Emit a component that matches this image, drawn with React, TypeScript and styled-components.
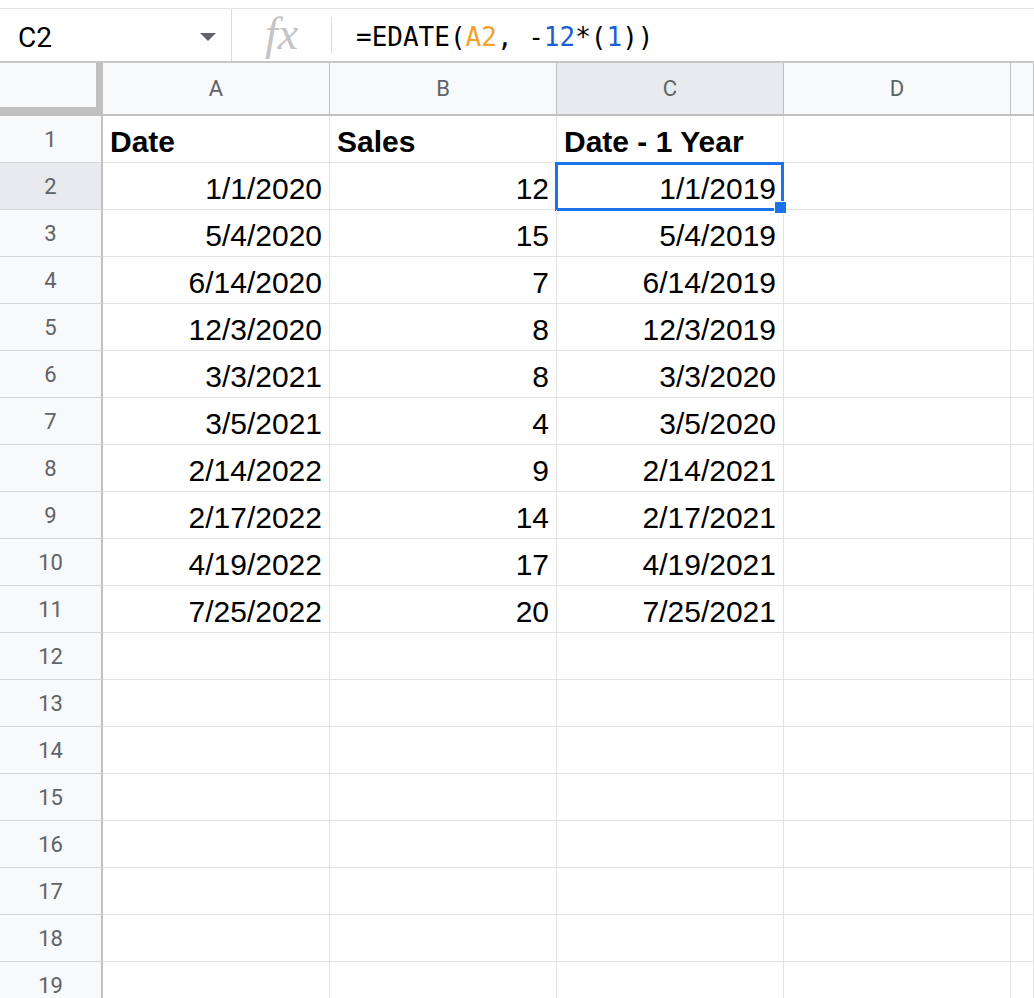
import React from "react";
import styled, { createGlobalStyle } from "styled-components";

const GlobalStyle = createGlobalStyle`
  html, body {
    margin: 0;
    padding: 0;
    background: #fff;
    overflow: hidden;
  }
  body {
    font-family: "Liberation Sans", Arial, sans-serif;
  }
`;

const Page = styled.div`
  width: 1034px;
  height: 998px;
  overflow: hidden;
  background: #fff;
`;

const FormulaBar = styled.div`
  margin-top: 8px;
  height: 52px;
  border-top: 1px solid #e3e3e3;
  border-bottom: 2px solid #c7c7c7;
  display: flex;
  align-items: stretch;
`;

const NameBox = styled.div`
  width: 232px;
  box-sizing: border-box;
  padding: 4px 15px 0 18px;
  display: flex;
  align-items: center;
  justify-content: space-between;
  border-right: 1px solid #dadce0;
  font-family: Roboto, "Liberation Sans", sans-serif;
  font-size: 28px;
  color: #000;
`;

const Caret = styled.span`
  width: 0;
  height: 0;
  border-left: 8px solid transparent;
  border-right: 8px solid transparent;
  border-top: 8px solid #5f6368;
`;

const FxBox = styled.div`
  width: 99px;
  display: flex;
  align-items: center;
  justify-content: center;
  font-family: "Liberation Serif", "Times New Roman", serif;
  font-style: italic;
  font-size: 46px;
  color: #c4c4c4;
  padding-bottom: 4px;
  box-sizing: border-box;
`;

const Divider = styled.div`
  width: 1px;
  height: 37px;
  background: #dadce0;
  align-self: center;
`;

const FormulaText = styled.div`
  padding: 4px 0 0 24px;
  display: flex;
  align-items: center;
  font-family: "DejaVu Sans Mono", "Liberation Mono", monospace;
  font-size: 26px;
  color: #000;
  white-space: pre;
`;

const Ref = styled.span<{ $tone: "orange" | "blue" }>`
  color: ${(p) => (p.$tone === "orange" ? "#f4a02a" : "#1a5fd0")};
`;

const Grid = styled.div`
  display: grid;
  grid-template-columns: 103px repeat(4, 227px) 1fr;
  grid-template-rows: 53px;
  grid-auto-rows: 47px;
`;

const Corner = styled.div`
  background: #f8f9fa;
  border-right: 7px solid #c0c0c0;
  border-bottom: 9px solid #c0c0c0;
`;

const ColHeader = styled.div<{ $active?: boolean }>`
  background: ${(p) => (p.$active ? "#e8eaed" : "#f8f9fa")};
  border-right: 1px solid #c0c0c0;
  border-bottom: 2px solid #c0c0c0;
  display: flex;
  align-items: center;
  justify-content: center;
  font-family: Roboto, "Liberation Sans", sans-serif;
  font-size: 22px;
  color: #5f6368;
`;

const RowHeader = styled.div<{ $active?: boolean }>`
  background: ${(p) => (p.$active ? "#e8eaed" : "#f8f9fa")};
  border-right: 2px solid #c0c0c0;
  border-bottom: 1px solid #d6d6d6;
  display: flex;
  align-items: center;
  justify-content: center;
  font-family: Roboto, "Liberation Sans", sans-serif;
  font-size: 22px;
  color: #5f6368;
`;

const Cell = styled.div<{ $align?: "left" | "right"; $bold?: boolean }>`
  position: relative;
  border-right: 1px solid #e2e2e3;
  border-bottom: 1px solid #e2e2e3;
  display: flex;
  align-items: flex-end;
  justify-content: ${(p) => (p.$align === "right" ? "flex-end" : "flex-start")};
  padding: 0 7px 3px 7px;
  font-size: 30px;
  font-weight: ${(p) => (p.$bold ? 700 : 400)};
  color: #000;
  white-space: nowrap;
`;

const Selection = styled.div`
  position: absolute;
  top: -1px;
  left: -2px;
  right: -1px;
  bottom: -2px;
  border: 3px solid #1a73e8;
  pointer-events: none;
`;

const FillHandle = styled.div`
  position: absolute;
  right: -6px;
  bottom: -6px;
  width: 11px;
  height: 11px;
  background: #1a73e8;
  border: 1px solid #fff;
  z-index: 2;
`;

const columns = ["A", "B", "C", "D", ""];

const data: string[][] = [
  ["1/1/2020", "12", "1/1/2019"],
  ["5/4/2020", "15", "5/4/2019"],
  ["6/14/2020", "7", "6/14/2019"],
  ["12/3/2020", "8", "12/3/2019"],
  ["3/3/2021", "8", "3/3/2020"],
  ["3/5/2021", "4", "3/5/2020"],
  ["2/14/2022", "9", "2/14/2021"],
  ["2/17/2022", "14", "2/17/2021"],
  ["4/19/2022", "17", "4/19/2021"],
  ["7/25/2022", "20", "7/25/2021"],
];

const TOTAL_ROWS = 19;

export default function App() {
  const rows = [];
  for (let r = 1; r <= TOTAL_ROWS; r++) {
    const values =
      r === 1
        ? ["Date", "Sales", "Date - 1 Year"]
        : data[r - 2] ?? ["", "", ""];
    rows.push(
      <React.Fragment key={r}>
        <RowHeader $active={r === 2}>{r}</RowHeader>
        {values.map((v, i) => (
          <Cell key={i} $bold={r === 1} $align={r === 1 ? "left" : "right"}>
            {v}
            {r === 2 && i === 2 && (
              <Selection>
                <FillHandle />
              </Selection>
            )}
          </Cell>
        ))}
        <Cell />
        <Cell />
      </React.Fragment>
    );
  }

  return (
    <Page>
      <GlobalStyle />
      <FormulaBar>
        <NameBox>
          C2
          <Caret />
        </NameBox>
        <FxBox>fx</FxBox>
        <Divider />
        <FormulaText>
          =EDATE(<Ref $tone="orange">A2</Ref>, -<Ref $tone="blue">12</Ref>*(
          <Ref $tone="blue">1</Ref>))
        </FormulaText>
      </FormulaBar>
      <Grid>
        <Corner />
        {columns.map((c, i) => (
          <ColHeader key={i} $active={c === "C"}>
            {c}
          </ColHeader>
        ))}
        {rows}
      </Grid>
    </Page>
  );
}
